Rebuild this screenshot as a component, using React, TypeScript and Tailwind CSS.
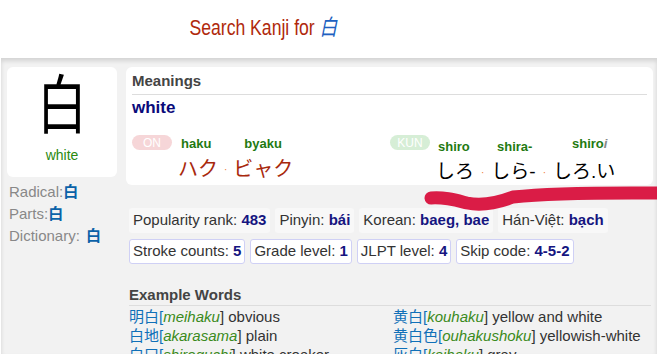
const jp = "font-['Liberation_Sans','Noto_Sans_CJK_JP',sans-serif]";

function InfoPill({ label, value, boxed }: { label: string; value: string; boxed?: boolean }) {
  return (
    <div
      className={
        'rounded-[3px] h-[25px] shrink-0 whitespace-nowrap flex items-center text-[15px] text-[#333] ' +
        (boxed ? 'bg-white border border-[#cfd0f5] px-[3px]' : 'bg-[#f8f8f8] px-[4px]')
      }
    >
      <span>{label}:&nbsp;</span>
      <b className="text-[#151580]">{value}</b>
    </div>
  );
}

function Reading({ text, dim }: { text: string; dim?: string }) {
  return (
    <span className="text-[#1f7a12] font-bold text-[13px]">
      {text}
      {dim && <i className="text-[#888] font-bold">{dim}</i>}
    </span>
  );
}

function Dot({ wide }: { wide?: boolean }) {
  return (
    <span className={'text-[#f07a30] text-[10px] align-middle ' + (wide ? 'mx-[7px]' : 'mx-[6px]')}>·</span>
  );
}

function App() {
  const examples = [
    ['明白', 'meihaku', 'obvious', '黄白', 'kouhaku', 'yellow and white'],
    ['白地', 'akarasama', 'plain', '黄白色', 'ouhakushoku', 'yellowish-white'],
    ['白口', 'shiroguchi', 'white croaker', '灰白', 'kaihaku', 'gray'],
  ];

  return (
    <div className={'w-[657px] h-[354px] overflow-hidden bg-white relative ' + jp}>
      {/* header */}
      <div className="h-[58px] flex items-center justify-center pr-[130px]">
        <h1 className="text-[22px] text-[#b0290c] mt-[-4px] inline-block scale-x-[0.8] whitespace-nowrap">
          Search Kanji for <i className="text-[#2060c0] font-normal">白</i>
        </h1>
      </div>

      <div className="bg-[#f2f2f2] ml-[1px] h-[296px] shadow-[inset_0_3px_4px_rgba(0,0,0,0.13)] pt-[9px] pl-[6px] pr-[4px] flex gap-[9px]">
        {/* left column */}
        <div className="w-[110px] shrink-0">
          <div className="bg-white rounded-[6px] h-[110px] flex flex-col items-center">
            <div className="text-[64px] leading-none mt-[7px] text-black scale-x-[0.78]">白</div>
            <div className="text-[14px] text-[#2a8a10] mt-[7px]">white</div>
          </div>
          <div className="text-[15px] text-[#888] leading-[22px] mt-[4px] pl-[2px]">
            <div>
              Radical:<b className="text-[#0b62a8]">白</b>
            </div>
            <div>
              Parts:<b className="text-[#0b62a8]">白</b>
            </div>
            <div>
              Dictionary: <b className="text-[#0b62a8] ml-[2px]">白</b>
            </div>
          </div>
        </div>

        {/* right column */}
        <div className="flex-1">
          <div className="bg-white rounded-[6px] h-[118px] px-[6px] pt-[3px]">
            <div className="text-[15px] font-bold text-[#444] border-b border-[#ddd] pb-[1px]">Meanings</div>
            <div className="text-[17px] font-bold text-[#0a0a7a]">white</div>
            <div className="flex mt-[14px]">
              <div className="w-[258px] flex">
                <span className="bg-[#f6d6d8] text-white text-[12px] rounded-full w-[40px] h-[15px] flex items-center justify-center mt-[1px]">
                  ON
                </span>
                <div className="ml-[9px]">
                  <div className="flex gap-[33px]">
                    <Reading text="haku" />
                    <Reading text="byaku" />
                  </div>
                  <div className="text-[20px] text-[#a8280c] leading-[24px] -ml-[3px] mt-[3px]">
                    ハク<Dot />ビャク
                  </div>
                </div>
              </div>
              <div className="flex">
                <span className="bg-[#d6eed6] text-white text-[12px] rounded-full w-[40px] h-[15px] flex items-center justify-center mt-[1px]">
                  KUN
                </span>
                <div className="ml-[8px]">
                  <div className="flex">
                    <span className="w-[59px]"><Reading text="shiro" /></span>
                    <span className="w-[75px]"><Reading text="shira-" /></span>
                    <Reading text="shiro" dim="i" />
                  </div>
                  <div className="text-[19px] text-black leading-[24px] -ml-[2px] mt-[2px]">
                    しろ<Dot wide />しら-<Dot wide />しろ.い
                  </div>
                </div>
              </div>
            </div>
          </div>

          <div className="mt-[23px] ml-[3px] flex flex-col gap-[6px]">
            <div className="flex gap-[5px]">
              <InfoPill label="Popularity rank" value="483" />
              <InfoPill label="Pinyin" value="bái" />
              <InfoPill label="Korean" value="baeg, bae" />
              <InfoPill label="Hán-Việt" value="bạch" />
            </div>
            <div className="flex gap-[5px]">
              <InfoPill label="Stroke counts" value="5" boxed />
              <InfoPill label="Grade level" value="1" boxed />
              <InfoPill label="JLPT level" value="4" boxed />
              <InfoPill label="Skip code" value="4-5-2" boxed />
            </div>
          </div>

          <div className="mt-[22px] ml-[3px] mr-[2px]">
            <div className="text-[15px] font-bold text-[#444] border-b border-[#ddd] pb-[1px] leading-[18px]">Example Words</div>
            <div className="grid grid-cols-[264px_1fr] text-[15px] leading-[19px] mt-[1px]">
              {examples.map((r) => (
                <>
                  <div key={r[0]} className="whitespace-nowrap">
                    <span className="text-[#1070b8]">{r[0]}</span>
                    <span className="text-[#1070b8]">[</span>
                    <i className="text-[#3a8a20]">{r[1]}</i>
                    <span className="text-[#333]">] {r[2]}</span>
                  </div>
                  <div key={r[3]} className="whitespace-nowrap">
                    <span className="text-[#1070b8]">{r[3]}</span>
                    <span className="text-[#1070b8]">[</span>
                    <i className="text-[#3a8a20]">{r[4]}</i>
                    <span className="text-[#333]">] {r[5]}</span>
                  </div>
                </>
              ))}
            </div>
          </div>
        </div>
      </div>

      {/* brush stroke annotation */}
      <svg className="absolute left-0 top-0 pointer-events-none" width="657" height="354">
        <path
          d="M431,198 C445,197 455,200 467,203 C482,206 500,202 513,197 C560,192 620,193 660,193"
          stroke="#d8103c"
          strokeWidth="13"
          strokeLinecap="round"
          fill="none"
          opacity="0.95"
        />
      </svg>
    </div>
  );
}

export default App;
